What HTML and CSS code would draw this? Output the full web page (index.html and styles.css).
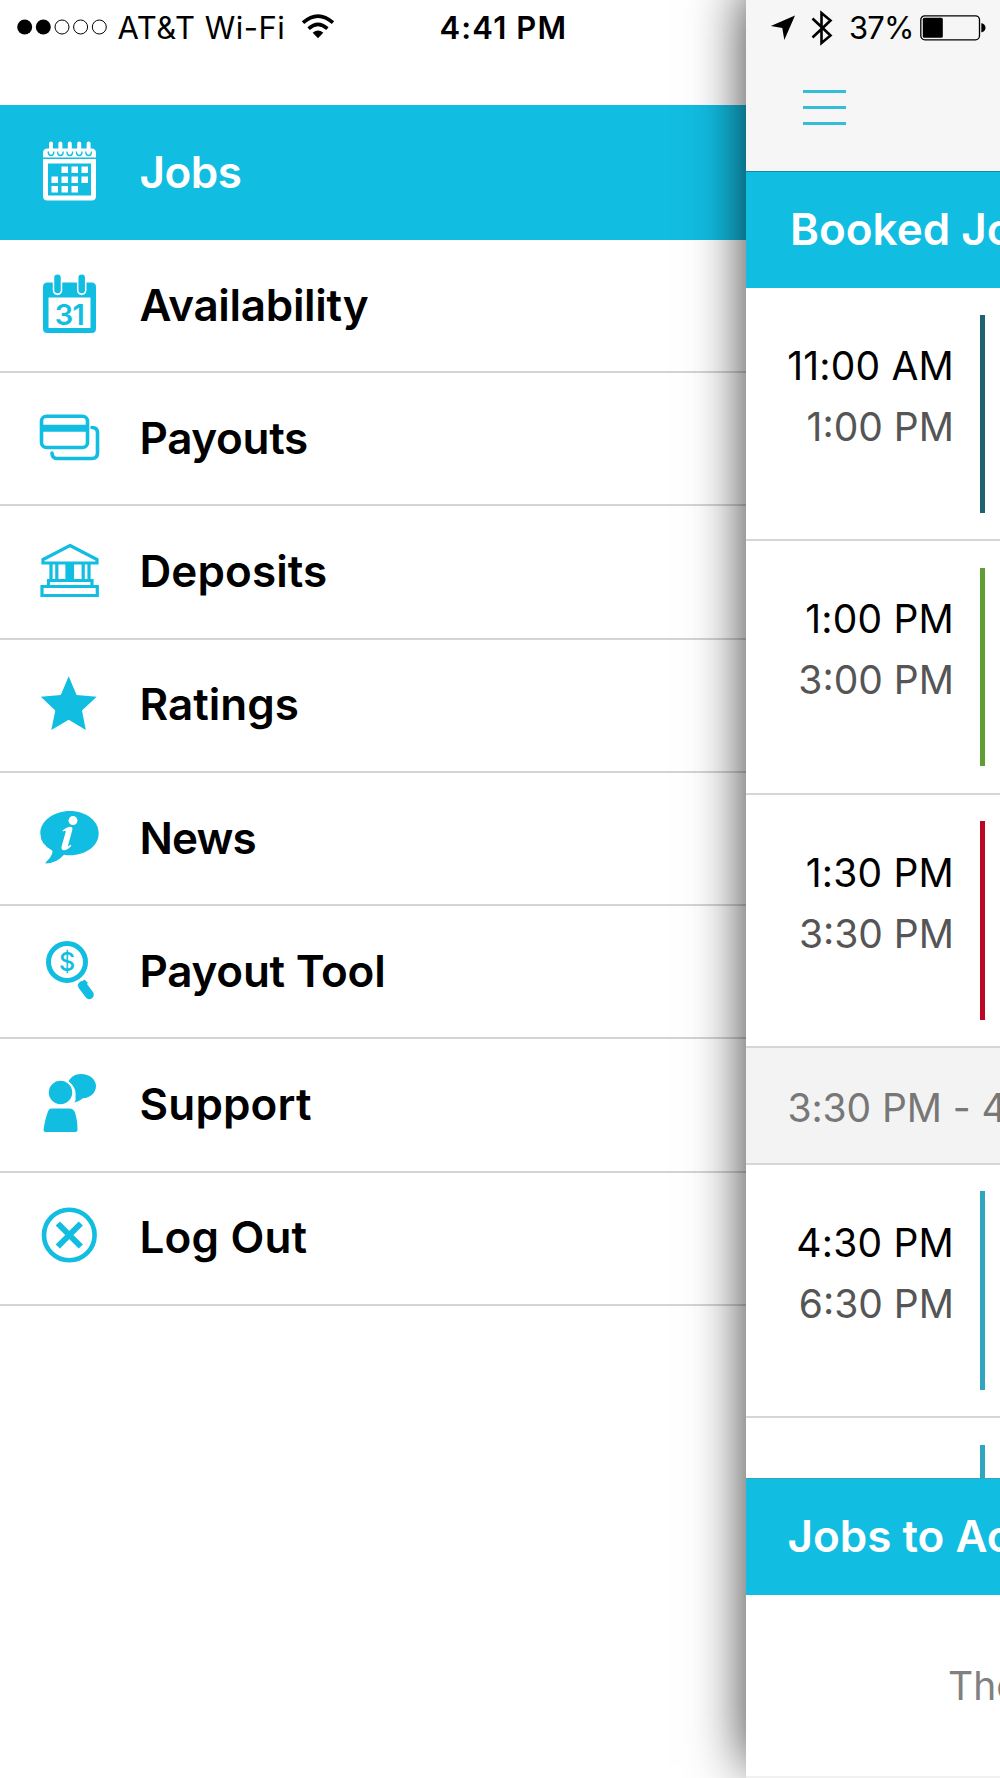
FILE: index.html
```html
<!DOCTYPE html>
<html lang="en">
<head>
<meta charset="utf-8">
<title>Jobs</title>
<link rel="stylesheet" href="styles.css">
</head>
<body>
<div class="app">
  <nav class="menu">
    <div class="status status-left">
      <svg class="signal" width="92" height="20" viewBox="0 0 92 20">
        <circle cx="8.7" cy="10" r="7.5"/><circle cx="27.3" cy="10" r="7.5"/>
        <g class="empty"><circle cx="46" cy="10" r="7"/><circle cx="64.6" cy="10" r="7"/><circle cx="83.3" cy="10" r="7"/></g>
      </svg>
      <span class="carrier">AT&amp;T Wi-Fi</span>
      <svg class="wifi" width="34" height="26" viewBox="0 0 34 26">
        <g fill="none" stroke="#000" stroke-width="3.6"><path d="M2 8.7Q17-4.500 32 8.700"/><path d="M7.600 14.600Q17 6.300 26.400 14.600"/></g>
        <path d="M11.700 18.700Q17 14.200 22.300 18.700L17 24.300Z"/>
      </svg>
      <span class="clock">4:41 PM</span>
    </div>
    <ul class="items">
      <li class="item active">
        <svg class="icon" viewBox="0 0 66 64">
          <path fill="#fff" fill-rule="evenodd" d="M7 16.500V12Q7 7.500 11.500 7.500H55.500Q60 7.500 60 12V16.500ZM7 18H60V55Q60 59.500 55.500 59.500H11.500Q7 59.500 7 55ZM12 22.500V54.500H55V22.500Z"/>
          <g stroke="#12bde2" stroke-width="1.500" fill="#fff">
            <path d="M12.300 10.500q0 4 2.700 4t2.700-4M21.700 10.500q0 4 2.700 4t2.700-4M31.100 10.500q0 4 2.700 4t2.700-4M40.500 10.500q0 4 2.700 4t2.700-4M49.900 10.500q0 4 2.700 4t2.700-4"/>
          </g>
          <path d="M15 2.500V11M24.400 2.500V11M33.800 2.500V11M43.200 2.500V11M52.600 2.500V11" stroke="#fff" stroke-width="4" stroke-linecap="round"/>
          <path fill="#fff" d="M25.500 25.500h6.500v6.500h-6.500zM35.500 25.500h6.500v6.500h-6.500zM45.500 25.500h6.500v6.500h-6.500zM15.500 35.500h6.500v6.500h-6.500zM25.500 35.500h6.500v6.500h-6.500zM35.500 35.500h6.500v6.500h-6.500zM45.500 35.500h6.500v6.500h-6.500zM15.500 45h6.500v6.500h-6.500zM25.500 45h6.500v6.500h-6.500zM35.500 45h6.500v6.500h-6.500z"/>
        </svg>
        <span class="label jobs">Jobs</span>
      </li>
      <li class="item">
        <svg class="icon" viewBox="0 0 66 64">
          <path fill-rule="evenodd" d="M11.500 8.500H55.500Q60 8.500 60 13V54.500Q60 59 55.500 59H11.500Q7 59 7 54.500V13Q7 8.500 11.500 8.500ZM12.500 23.500V54H54.500V23.500Z"/>
          <path d="M21.500 4V16.500M45.700 4V16.500" stroke="#fff" stroke-width="9.500" stroke-linecap="round"/>
          <path d="M21.500 3.700V16M45.700 3.700V16" stroke="#12bde2" stroke-width="6.500" stroke-linecap="round"/>
          <text class="date" x="33.500" y="50.500" text-anchor="middle">31</text>
        </svg>
        <span class="label availability">Availability</span>
      </li>
      <li class="item">
        <svg class="icon line" viewBox="0 0 66 64">
          <rect x="5.500" y="9.300" width="46" height="31.200" rx="5"/>
          <path d="M5.500 21.300H51.500" stroke-width="7"/>
          <path d="M56 20.500Q61.500 20.500 61.500 26V46Q61.500 51.500 56 51.500H21Q16 51.500 16 46" stroke-linecap="round"/>
        </svg>
        <span class="label payouts">Payouts</span>
      </li>
      <li class="item">
        <svg class="icon line thin" viewBox="0 0 66 64">
          <path d="M34 5.500L61 19.500V23H7V19.500ZM15 23V40M20.800 23V40M31 23V40M36.500 23V40M47.200 23V40M53 23V40M33.800 23V40M12.500 46V40.500H56V46M6 46.500H61.300V55.500H6Z"/>
        </svg>
        <span class="label deposits">Deposits</span>
      </li>
      <li class="item">
        <svg class="icon" viewBox="0 0 66 64">
          <path d="M32.700 3.200L40.600 22L60.700 23.700L46 37.500L49.800 57L32.700 46.800L15.300 57L19.300 37.500L4.800 23.700L24.800 22Z"/>
        </svg>
        <span class="label ratings">Ratings</span>
      </li>
      <li class="item">
        <svg class="icon" viewBox="0 0 66 64">
          <path d="M34 4C50 4 62.700 13.800 62.700 26.300S50 48.300 34 48.300Q31 48.300 28 47.700Q20 56.500 9.500 56.600Q9 55.500 12 53Q16.500 48.500 16.500 43.800Q4.300 37.500 4.300 26.300C4.300 13.800 18 4 34 4Z"/>
          <circle cx="37" cy="13.600" r="4.500" fill="#fff"/>
          <path fill="#fff" d="M26.500 23.500Q31 19.700 34.500 19.700Q37 20 36.300 23L32 38.500Q31.500 40.500 34.800 37.500L35.200 39Q31 43.300 28 43.300Q24.700 43.200 25.700 39L29.700 25Q30 22.800 27 24.500Z"/>
        </svg>
        <span class="label news">News</span>
      </li>
      <li class="item">
        <svg class="icon" viewBox="0 0 66 64">
          <circle cx="31" cy="22" r="18.500" fill="none" stroke="#12bde2" stroke-width="5"/>
          <text class="dollar" x="31" y="30.500" text-anchor="middle">$</text>
          <path d="M46.500 45.500L53.300 54.700" stroke="#12bde2" stroke-width="9" stroke-linecap="round"/>
          <path d="M41.500 45L48.500 39.600L52 43L45 49Z"/>
        </svg>
        <span class="label tool">Payout Tool</span>
      </li>
      <li class="item">
        <svg class="icon" viewBox="0 0 66 64">
          <path d="M15.500 35.500H33Q37.500 35.500 39 39.500Q41.500 47 41.500 57Q41.500 59 39.500 59H9.500Q7.500 59 7.500 57Q9 46 12 38.500Q13 35.500 15.500 35.500Z"/>
          <path d="M32.500 9C34 4.300 39 1 45 1C53.500 1 60 6.500 60 13C60 20 54 25 47 25.200Q43 28.600 38.300 29.500Q40.300 27 39.500 24C40.500 16 37 12 32.500 9Z"/>
          <circle cx="24.500" cy="19.500" r="12.700" stroke="#fff" stroke-width="2"/>
        </svg>
        <span class="label support">Support</span>
      </li>
      <li class="item">
        <svg class="icon line" viewBox="0 0 66 64">
          <circle cx="33.300" cy="29" r="25.300" stroke-width="4.600"/>
          <path d="M21.800 17.500L44.800 40.500M44.800 17.500L21.800 40.500" stroke-width="6"/>
        </svg>
        <span class="label logout">Log Out</span>
      </li>
    </ul>
  </nav>

  <main class="panel">
    <header class="topbar">
      <div class="status status-right">
        <svg width="26" height="26" viewBox="0 0 26 26"><path d="M.8 11L25 .5L14.300 25L12.300 13Z"/></svg>
        <svg class="bluetooth" width="22" height="36" viewBox="0 0 22 36"><path d="M1.500 8.500L19.500 25.500L10.500 33V3L19.500 10.500L1.500 27.500" fill="none" stroke="#000" stroke-width="2.600"/></svg>
        <span class="percent">37%</span>
        <svg class="battery" width="66" height="26" viewBox="0 0 66 26">
          <rect x=".8" y=".8" width="58.700" height="24" rx="4" fill="none" stroke="#000" stroke-width="1.300"/>
          <rect x="2.800" y="2.800" width="20" height="20" rx="1.500"/>
          <path d="M61.300 8.300H62Q65.500 9.500 65.500 12.800T62 17.300H61.300Z"/>
        </svg>
      </div>
      <div class="burger"><i></i><i></i><i></i></div>
    </header>
    <h2 class="section booked">Booked Jo</h2>
    <div class="job"><div class="times"><b>11:00 AM</b><span>1:00 PM</span></div><div class="bar teal"></div></div>
    <div class="job"><div class="times"><b>1:00 PM</b><span>3:00 PM</span></div><div class="bar green"></div></div>
    <div class="job"><div class="times"><b>1:30 PM</b><span>3:30 PM</span></div><div class="bar red"></div></div>
    <div class="gap">3:30 PM - 4</div>
    <div class="job"><div class="times"><b>4:30 PM</b><span>6:30 PM</span></div><div class="bar sky"></div></div>
    <div class="job cut"><div class="times"></div><div class="bar sky"></div></div>
    <h2 class="section accept">Jobs to Ac</h2>
    <p class="empty-note">The</p>
  </main>
</div>
</body>
</html>
```
FILE: styles.css
```css
* { box-sizing: border-box; }
body {
  margin: 0;
  background: #fff;
  color: #000;
  font-family: Inter, "Liberation Sans", sans-serif;
  white-space: nowrap;
}
.app {
  display: grid;
  grid-template-columns: 746px 254px;
  height: 1778px;
  overflow: hidden;
}
svg { display: block; flex: none; }

/* Status bar */
.status { display: flex; align-items: center; height: 55px; font-size: 31px; line-height: 56px; }
.status-left { padding-left: 16px; height: 105.300px; align-items: flex-start; }
.signal { margin-top: 17px; }
.signal .empty { fill: none; stroke: #000; stroke-width: 1; }
.carrier { width: 168px; margin-left: 9.500px; letter-spacing: .5px; }
.wifi { margin: 14px 0 0 15px; }
.clock { margin-left: 105px; font-weight: 600; letter-spacing: 1.150px; }
.status-right { padding-left: 24px; }
.bluetooth { margin-left: 14.500px; }
.percent { margin-left: 16.500px; width: 62px; letter-spacing: -.85px; }
.battery { margin-left: 9px; }

/* Side menu */
.items { list-style: none; margin: 0; padding: 0; }
.item {
  display: flex;
  align-items: center;
  height: 133.250px;
  padding-left: 36px;
  border-bottom: 2px solid #d4d4d4;
}
.item.active { height: 134.700px; background: #12bde2; border: 0; color: #fff; }
.icon { width: 66px; height: 64px; fill: #12bde2; }
.icon.line { fill: none; stroke: #12bde2; stroke-width: 3.600; }
.icon.thin { stroke-width: 3.200; }
.icon .date { font-size: 29px; font-weight: 600; letter-spacing: -.5px; }
.icon .dollar { font-size: 25px; font-weight: 500; }
.label {
  margin-left: 37.500px;
  padding-bottom: 2px;
  font-size: 44px;
  font-weight: 600;
  line-height: 60px;
}
.jobs { letter-spacing: -.5px; }
.availability { letter-spacing: -.3px; }
.payouts { letter-spacing: -.33px; }
.deposits { letter-spacing: .09px; }
.news { letter-spacing: -.9px; }
.tool { letter-spacing: -.25px; }
.support, .logout { letter-spacing: .16px; }

/* Jobs panel */
.panel {
  position: relative;
  height: 1778px;
  background: #fff;
  box-shadow: 0 -12px 52px rgba(0, 0, 0, .78);
  border-bottom: 2px solid #f1f1f1;
}
.topbar { height: 171px; background: #f6f6f6; }
.burger { display: flex; flex-direction: column; gap: 13px; width: 43px; margin: 35px 0 0 56.500px; }
.burger i { height: 3px; background: #35bcd8; }
.section {
  margin: 0;
  height: 117.300px;
  overflow: hidden;
  background: #12bde2;
  border-top: 1px solid #138ba5;
  color: #fff;
  font-size: 44px;
  font-weight: 600;
  line-height: 115px;
}
.booked { padding-left: 44px; line-height: 114px; }
.accept { padding-left: 41.500px; border-color: #35a5bd; }
.job { display: flex; height: 253.200px; border-bottom: 2px solid #d6d6d6; }
.job.cut { height: 60px; overflow: hidden; border: 0; }
.times {
  display: flex;
  flex-direction: column;
  align-items: flex-end;
  width: 208px;
  padding-top: 47px;
  font-size: 39px;
  line-height: 61px;
}
.times b { font-weight: 400; letter-spacing: .2px; }
.times span { color: #555; }
.bar { flex: none; width: 5px; height: 198.500px; margin: 26.500px 0 0 26px; }
.teal { background: #1e6374; }
.green { background: #609d33; }
.red { background: #bd0823; }
.sky { background: #2fa5bf; }
.gap {
  height: 117px;
  padding: 1px 0 0 41.500px;
  overflow: hidden;
  background: #f3f3f3;
  border-bottom: 2px solid #d6d6d6;
  color: #777;
  font-size: 39px;
  line-height: 117px;
  letter-spacing: -.1px;
}
.empty-note {
  margin: 0;
  padding: 60px 0 0 202px;
  overflow: hidden;
  color: #808080;
  font-size: 39px;
  line-height: 61px;
}
```
